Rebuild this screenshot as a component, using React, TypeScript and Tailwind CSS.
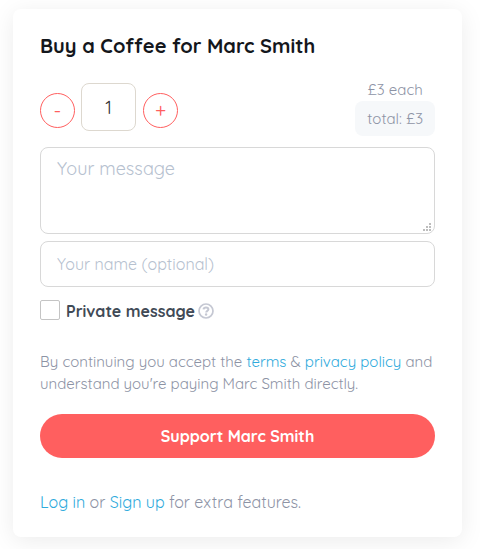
import { useState } from "react";

const PRICE = 3;

function ResizeGrip() {
  return (
    <svg
      className="pointer-events-none absolute right-1 bottom-[3px] h-2 w-2"
      viewBox="0 0 8 8"
      fill="#bdbdbd"
      shapeRendering="crispEdges"
      aria-hidden="true"
    >
      <rect x="6" y="0" width="2" height="2" />
      <rect x="3" y="3" width="2" height="2" />
      <rect x="6" y="3" width="2" height="2" />
      <rect x="0" y="6" width="2" height="2" />
      <rect x="3" y="6" width="2" height="2" />
      <rect x="6" y="6" width="2" height="2" />
    </svg>
  );
}

function HelpIcon() {
  return (
    <svg className="ml-[3px] h-4 w-4" viewBox="0 0 16 16" fill="none" stroke="#c5c8d3" aria-hidden="true">
      <circle cx="8" cy="8" r="7" strokeWidth="1.7" />
      <path
        d="M5.5 6.4C5.7 5 6.7 4.4 8 4.4c1.4 0 2.4.7 2.4 1.9 0 1.6-2.2 1.4-2.2 3.1"
        strokeWidth="2"
      />
      <circle cx="8.1" cy="11.5" r="1.2" fill="#c5c8d3" stroke="none" />
    </svg>
  );
}

export default function App() {
  const [count, setCount] = useState(1);
  const round =
    "mt-[10px] flex h-[35px] w-[35px] items-center justify-center rounded-full border border-[#ff5f5f] text-xl leading-none text-[#ff5f5f]";

  return (
    <main className="bg-white pt-[9px] pr-[18px] pb-3 pl-[13px] font-['Quicksand','Lato',sans-serif] text-[#8d93a5]">
      <form
        className="rounded-lg bg-white px-[27px] pt-[25px] pb-[23px] shadow-[0_4px_24px_rgba(0,0,0,0.08)]"
        onSubmit={(e) => e.preventDefault()}
      >
        <h1 className="text-xl leading-6 font-bold text-[#14171c]">Buy a Coffee for Marc Smith</h1>

        <div className="mt-[25px] flex items-start justify-between">
          <div className="flex items-start">
            <button
              type="button"
              aria-label="Fewer coffees"
              className={round}
              onClick={() => setCount(Math.max(1, count - 1))}
            >
              -
            </button>
            <input
              aria-label="Number of coffees"
              className="mr-[7px] ml-[6px] h-12 w-[55px] rounded-lg border border-[#ddd8cf] text-center text-lg text-[#333] outline-none"
              value={count}
              onChange={(e) => setCount(Number(e.target.value) || 1)}
            />
            <button
              type="button"
              aria-label="More coffees"
              className={round}
              onClick={() => setCount(count + 1)}
            >
              +
            </button>
          </div>
          <div className="flex flex-col items-center text-[15px]">
            <span className="h-[18px] leading-[14px]">£{PRICE} each</span>
            <span className="rounded-lg bg-[#f6f8fa] px-3 leading-[35px]">total: £{PRICE * count}</span>
          </div>
        </div>

        <div className="relative mt-[11px] h-[87px]">
          <textarea
            aria-label="Your message"
            placeholder="Your message"
            className="block h-full w-full resize-none rounded-lg border border-[#d8d8d8] px-4 py-[9px] text-lg leading-6 outline-none placeholder:text-[#b6c1cf]"
          />
          <ResizeGrip />
        </div>
        <input
          type="text"
          aria-label="Your name (optional)"
          placeholder="Your name (optional)"
          className="mt-[7px] block h-[46px] w-full rounded-lg border border-[#d8d8d8] px-4 text-base outline-none placeholder:text-[#b6c1cf]"
        />

        <div className="mt-[13px] flex items-start">
          <input
            id="private"
            type="checkbox"
            className="h-5 w-5 appearance-none rounded-xs border border-[#c4c4c4] checked:bg-[#ff5f5f]"
          />
          <div className="flex h-[22px] items-center">
            <label htmlFor="private" className="pl-[6px] text-base leading-[22px] font-bold text-[#414a56]">
              Private message
            </label>
            <HelpIcon />
          </div>
        </div>

        <p className="mt-[29px] text-[15px] leading-[22px]">
          By continuing you accept the{" "}
          <a href="#terms" className="text-[#2eaadc]">terms</a> &amp;{" "}
          <a href="#privacy" className="text-[#2eaadc]">privacy policy</a> and understand you're paying Marc
          Smith directly.
        </p>

        <button
          type="submit"
          className="mt-[19px] h-11 w-full rounded-full bg-[#ff5f5f] text-base font-bold text-white"
        >
          Support Marc Smith
        </button>

        <p className="mt-8 text-base leading-6">
          <a href="#login" className="text-[#2eaadc]">Log in</a> or{" "}
          <a href="#signup" className="text-[#2eaadc]">Sign up</a> for extra features.
        </p>
      </form>
    </main>
  );
}
